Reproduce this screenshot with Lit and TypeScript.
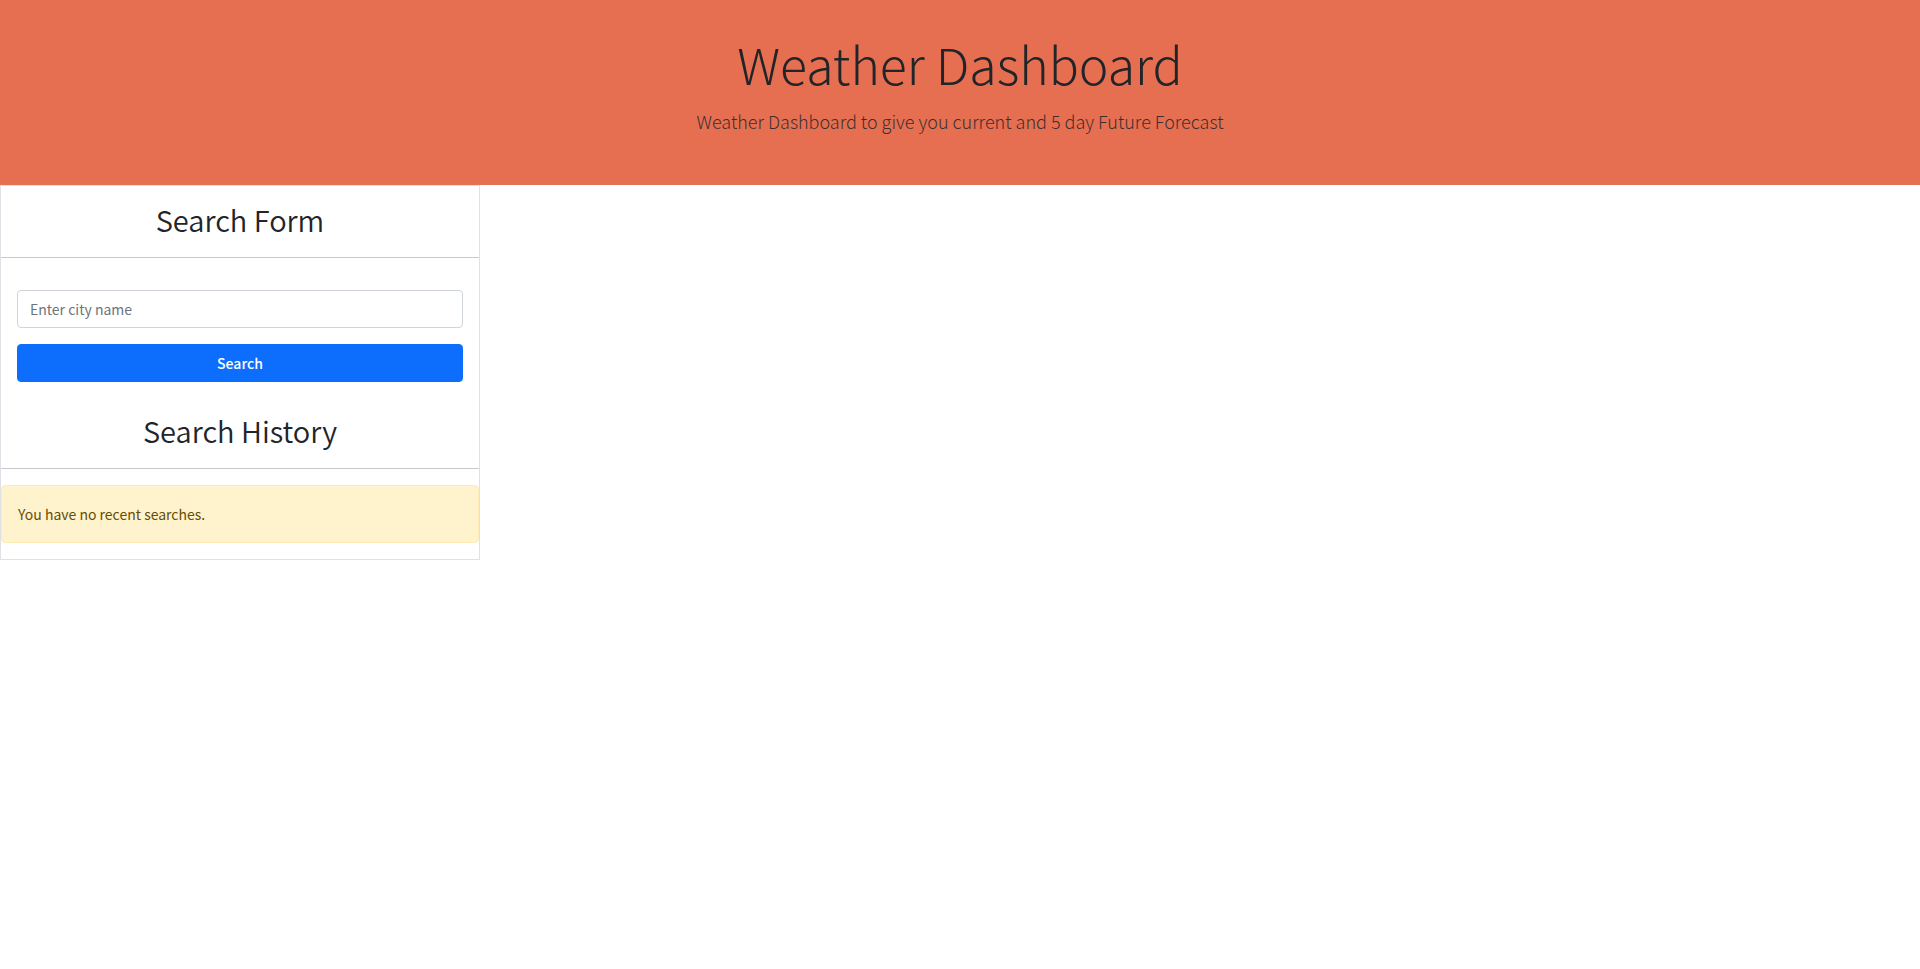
import { LitElement, html, css } from "lit";
import { customElement, state } from "lit/decorators.js";

@customElement("app-root")
export class AppRoot extends LitElement {
  static styles = css`
    :host {
      display: block;
      min-height: 100vh;
      background: #fff;
      color: #212529;
      font-family: "Noto Sans CJK JP", "Noto Sans", sans-serif;
      font-size: 14px;
      line-height: 24px;
    }
    * {
      box-sizing: border-box;
    }
    .banner {
      padding: 32px;
      background: #e76f51;
      text-align: center;
    }
    .title {
      margin: 0 0 12px;
      font-size: 50px;
      font-weight: 300;
      line-height: 63px;
    }
    .lead {
      margin: 0 0 18px;
      font-size: 18px;
      font-weight: 300;
      line-height: 28px;
      opacity: 0.85;
    }
    .main {
      display: flex;
      align-items: flex-start;
    }
    .sidebar {
      width: 25%;
      min-width: 240px;
      padding: 16px 0;
      border: 1px solid #dee2e6;
    }
    .heading {
      margin: 0 0 20px;
      font-size: 29px;
      font-weight: 350;
      line-height: 35px;
      text-align: center;
    }
    .rule {
      height: 1px;
      margin: 0 0 16px;
      border: 0;
      background: #c8c9ca;
    }
    .form {
      display: flex;
      flex-direction: column;
      gap: 16px;
      margin-bottom: 15px;
      padding: 16px;
    }
    .input,
    .button {
      width: 100%;
      height: 38px;
      margin: 0;
      padding: 6px 12px;
      border: 1px solid #ced4da;
      border-radius: 4px;
      font: inherit;
    }
    .input {
      background: #fff;
      color: #212529;
    }
    .input::placeholder {
      color: #6c757d;
      opacity: 1;
    }
    .button {
      border-color: #0d6efd;
      background: #0d6efd;
      color: #fff;
      font-weight: 500;
      cursor: pointer;
    }
    .alert {
      padding: 16px;
      border: 1px solid #ffecb5;
      border-radius: 4px;
      background: #fff3cd;
      color: #664d03;
    }
    .history {
      margin: 0;
      padding: 0 16px;
      list-style: none;
    }
  `;

  @state() private recent: string[] = [];

  private onSubmit(event: SubmitEvent) {
    event.preventDefault();
    const form = event.target as HTMLFormElement;
    const city = String(new FormData(form).get("city") ?? "").trim();
    if (!city) return;
    this.recent = [city, ...this.recent.filter((name) => name !== city)];
    form.reset();
  }

  render() {
    return html`
      <header class="banner">
        <h1 class="title">Weather Dashboard</h1>
        <p class="lead">Weather Dashboard to give you current and 5 day Future Forecast</p>
      </header>
      <main class="main">
        <aside class="sidebar">
          <h2 class="heading">Search Form</h2>
          <hr class="rule" />
          <form class="form" @submit=${this.onSubmit}>
            <input class="input" type="text" name="city" placeholder="Enter city name" aria-label="City name" autocomplete="off" />
            <button class="button" type="submit">Search</button>
          </form>
          <h2 class="heading">Search History</h2>
          <hr class="rule" />
          ${this.recent.length
            ? html`<ul class="history">${this.recent.map((name) => html`<li>${name}</li>`)}</ul>`
            : html`<div class="alert" role="status">You have no recent searches.</div>`}
        </aside>
      </main>
    `;
  }
}
